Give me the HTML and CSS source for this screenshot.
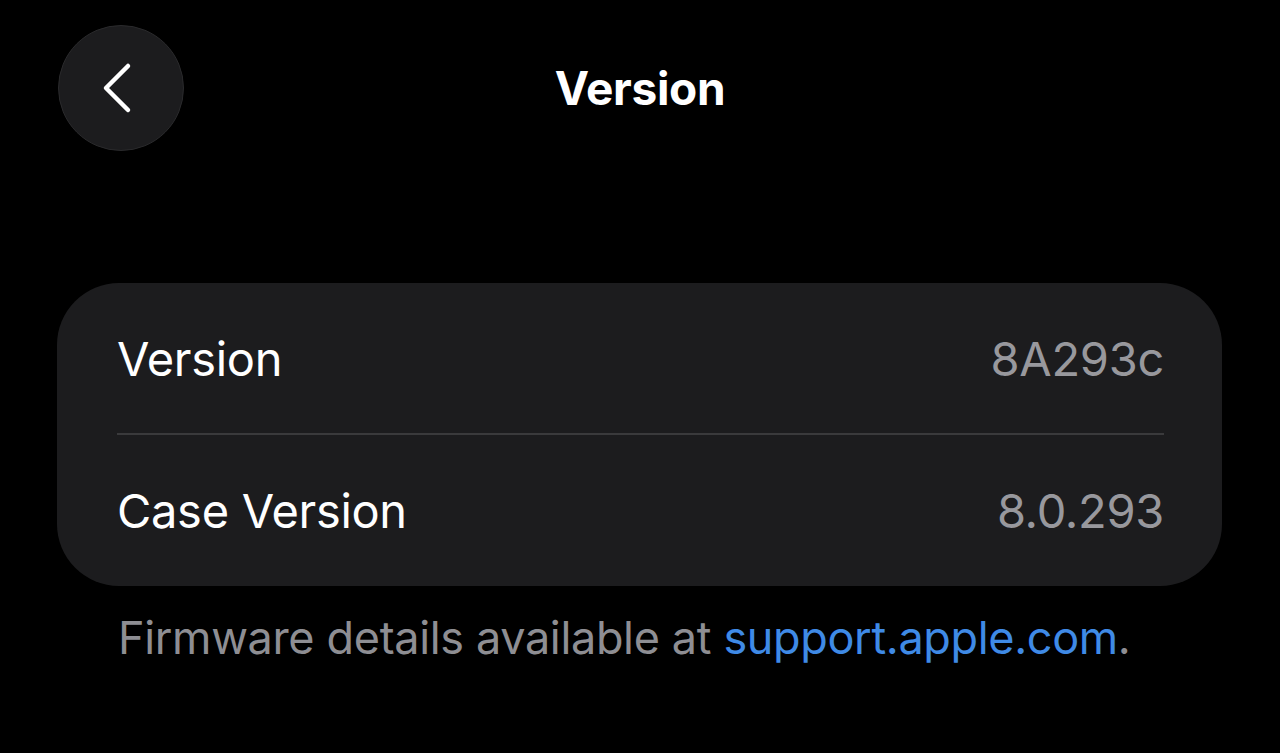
FILE: index.html
```html
<!DOCTYPE html>
<html lang="en">
<head>
<meta charset="utf-8">
<title>Version</title>
<link rel="stylesheet" href="styles.css">
</head>
<body>
<div class="screen">
  <header class="nav">
    <div class="nav-left">
      <button class="back" aria-label="Back">
        <svg width="40" height="52" viewBox="0 0 40 52"><path d="M30 4 L8 26 L30 48" fill="none" stroke="#fff" stroke-width="4.5" stroke-linecap="round" stroke-linejoin="round"/></svg>
      </button>
    </div>
    <h1 class="title">Version</h1>
    <div class="nav-right"></div>
  </header>

  <section class="card">
    <div class="row">
      <span class="label">Version</span>
      <span class="value">8A293c</span>
    </div>
    <div class="divider"></div>
    <div class="row">
      <span class="label">Case Version</span>
      <span class="value">8.0.293</span>
    </div>
  </section>

  <p class="footnote">Firmware details available at <a class="link" href="#">support.apple.com</a>.</p>
</div>
</body>
</html>
```

FILE: styles.css
```css
html, body {
  margin: 0;
  padding: 0;
  background: #000;
}
body {
  font-family: Inter, "Noto Sans", "Liberation Sans", sans-serif;
  color: #fff;
  width: 1280px;
  height: 753px;
  overflow: hidden;
}
.screen {
  display: flex;
  flex-direction: column;
}
.nav {
  display: grid;
  grid-template-columns: 1fr auto 1fr;
  align-items: center;
  padding: 25px 58px 0 58px;
  height: 126px;
}
.back {
  width: 126px;
  height: 126px;
  border-radius: 50%;
  background: #1c1c1e;
  border: 1px solid #2a2a2c;
  display: flex;
  align-items: center;
  justify-content: center;
  padding: 0 6px 0 0;
  cursor: pointer;
}
.title {
  margin: 0;
  font-size: 46px;
  font-weight: 700;
  letter-spacing: -0.3px;
  color: #fff;
}
.card {
  margin: 132px 58px 0 57px;
  background: #1c1c1e;
  border-radius: 62px;
  padding: 0 58px 0 60px;
}
.row {
  display: flex;
  justify-content: space-between;
  align-items: center;
  height: 150px;
  font-size: 47px;
  letter-spacing: -0.3px;
}
.row + .divider + .row {
  height: 151px;
}
.label {
  color: #fff;
}
.value {
  color: #98989d;
}
.divider {
  height: 2px;
  background: #3a3a3c;
}
.footnote {
  margin: 24px 0 0 118px;
  font-size: 45px;
  color: #8e8e93;
  letter-spacing: -0.35px;
}
.link {
  color: #3f8ae6;
  text-decoration: none;
}
```
